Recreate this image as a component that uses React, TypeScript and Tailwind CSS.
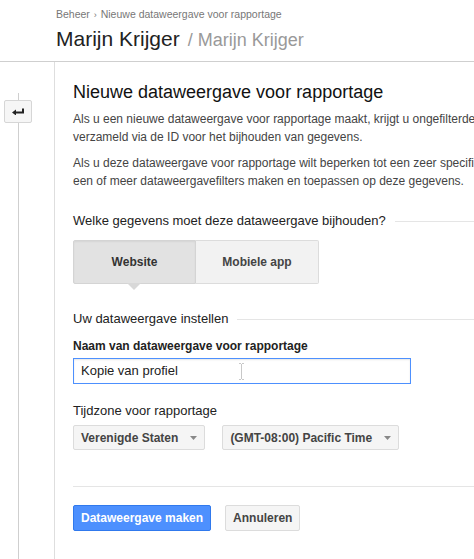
import React from 'react'

const FONT = { fontFamily: '"Liberation Sans", Arial, sans-serif' }

function SectionTitle({ children }: { children: React.ReactNode }) {
  return (
    <div className="flex items-center">
      <span className="shrink-0 whitespace-nowrap text-[13px] leading-[18px] text-[#222]">{children}</span>
      <div className="ml-[9px] h-px flex-1 bg-[#e5e5e5]" />
    </div>
  )
}

function SelectBox({ label }: { label: string }) {
  return (
    <button
      type="button"
      className="flex h-[25px] items-center rounded-[2px] border border-[#dcdcdc] bg-[#f5f5f5] pl-[7px] pr-[7px] text-[12px] font-bold text-[#444]"
    >
      <span className="whitespace-nowrap">{label}</span>
      <svg className="ml-[12px]" width="7" height="4" viewBox="0 0 7 4">
        <path d="M0 0h7L3.5 4z" fill="#888" />
      </svg>
    </button>
  )
}

export default function App() {
  return (
    <div className="flex min-h-screen flex-col overflow-hidden bg-white" style={FONT}>

      {/* ── Header ─────────────────────────────────────────── */}
      <div className="border-b border-[#cfcfcf] pl-[56px] pt-[7px] pb-[8px]">
        <div className="whitespace-nowrap text-[10.5px] leading-[14px] text-[#777]">
          Beheer <span className="mx-[1px] text-[9px]">›</span> Nieuwe dataweergave voor rapportage
        </div>
        <div className="mt-[5px] whitespace-nowrap leading-[24px]">
          <span className="text-[21px] text-[#222]">Marijn Krijger</span>
          <span className="ml-[3px] text-[18px] text-[#999]"> / Marijn Krijger</span>
        </div>
      </div>

      {/* ── Body ───────────────────────────────────────────── */}
      <div className="flex flex-1">

        {/* left rail with back button */}
        <div className="flex w-[55px] shrink-0 flex-col border-r border-[#dedede] pl-[4px] pt-[31px]">
          <div className="flex w-[28px] flex-1 flex-col items-center">
            <div className="h-[7px] w-px bg-[#cfcfcf]" />
            <button
              type="button"
              className="flex h-[23px] w-[28px] items-center justify-center rounded-[2px] border border-[#d6d6d6] bg-[#f6f6f6]"
            >
              <svg width="12" height="7" viewBox="0 0 12 7">
                <path d="M0 4.5 4 1.5v6z" fill="#222" />
                <path d="M3 4.5h8V0.5" fill="none" stroke="#222" strokeWidth="2" />
              </svg>
            </button>
            <div className="w-px flex-1 bg-[#cfcfcf]" />
          </div>
        </div>

        {/* main form */}
        <div className="min-w-0 flex-1 pl-[18px] pt-[19px]">
          <h1 className="whitespace-nowrap text-[18px] leading-[22px] text-[#111]">
            Nieuwe dataweergave voor rapportage
          </h1>

          <p className="mt-[7px] whitespace-nowrap text-[12px] leading-[18px] text-[#444]">
            Als u een nieuwe dataweergave voor rapportage maakt, krijgt u ongefilterde toegang tot alle gegevens die worden
            <br />
            verzameld via de ID voor het bijhouden van gegevens.
          </p>
          <p className="mt-[8px] whitespace-nowrap text-[12px] leading-[18px] text-[#444]">
            Als u deze dataweergave voor rapportage wilt beperken tot een zeer specifieke subset van gegevens, kunt u
            <br />
            een of meer dataweergavefilters maken en toepassen op deze gegevens.
          </p>

          <div className="mt-[22px]">
            <SectionTitle>Welke gegevens moet deze dataweergave bijhouden?</SectionTitle>
          </div>

          {/* segmented choice */}
          <div className="relative mt-[10px] flex w-[246px]">
            <button
              type="button"
              className="h-[44px] w-[123px] rounded-l-[2px] border border-[#d4d4d4] bg-[#e2e2e2] text-[12px] font-bold text-[#333] shadow-[inset_0_1px_2px_rgba(0,0,0,0.06)]"
            >
              Website
            </button>
            <button
              type="button"
              className="h-[44px] w-[123px] rounded-r-[2px] border border-l-0 border-[#dcdcdc] bg-[#f2f2f2] text-[12px] font-bold text-[#444]"
            >
              Mobiele app
            </button>
            <div className="absolute left-[54px] top-[43px] h-0 w-0 border-l-[7px] border-r-[7px] border-t-[7px] border-l-transparent border-r-transparent border-t-[#d8d8d8]" />
          </div>

          <div className="mt-[26px]">
            <SectionTitle>Uw dataweergave instellen</SectionTitle>
          </div>

          <label className="mt-[10px] block whitespace-nowrap text-[12px] font-bold leading-[16px] text-[#222]">
            Naam van dataweergave voor rapportage
          </label>
          <div className="relative mt-[4px] flex h-[26px] w-[338px] items-center border border-[#4d90fe] pl-[7px] shadow-[inset_0_1px_2px_rgba(0,0,0,0.1)]">
            <span className="text-[13px] text-[#222]">Kopie van profiel</span>
            {/* mouse I-beam */}
            <svg className="absolute left-[164px] top-[4px]" width="7" height="17" viewBox="0 0 7 17">
              <path d="M1 0.5h2M4 0.5h2M3.5 1v15M1 16.5h2M4 16.5h2" stroke="#c8c8c8" strokeWidth="1" fill="none" />
            </svg>
          </div>

          <div className="mt-[19px] whitespace-nowrap text-[13px] leading-[16px] text-[#222]">
            Tijdzone voor rapportage
          </div>
          <div className="mt-[6px] flex gap-[17px]">
            <SelectBox label="Verenigde Staten" />
            <SelectBox label="(GMT-08:00) Pacific Time" />
          </div>

          <div className="mt-[36px] h-px bg-[#e5e5e5]" />

          <div className="mt-[18px] flex gap-[14px]">
            <button
              type="button"
              className="h-[26px] rounded-[2px] border border-[#3079ed] bg-[#4d90fe] px-[7px] text-[12px] font-bold text-white"
            >
              Dataweergave maken
            </button>
            <button
              type="button"
              className="h-[26px] rounded-[2px] border border-[#dcdcdc] bg-[#f5f5f5] px-[7px] text-[12px] font-bold text-[#444]"
            >
              Annuleren
            </button>
          </div>
        </div>
      </div>
    </div>
  )
}
